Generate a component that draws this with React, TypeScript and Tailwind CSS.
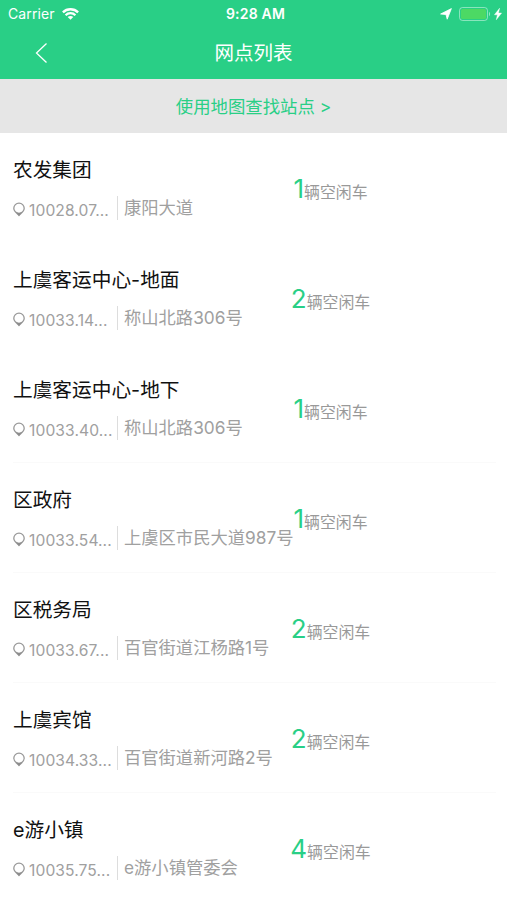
import clsx from 'clsx';

type Station = {
  name: string;
  coords: string;
  address: string;
  free: number;
  divider?: boolean;
};

const stations: Station[] = [
  { name: '农发集团', coords: '10028.07...', address: '康阳大道', free: 1 },
  { name: '上虞客运中心-地面', coords: '10033.14...', address: '称山北路306号', free: 2 },
  { name: '上虞客运中心-地下', coords: '10033.40...', address: '称山北路306号', free: 1, divider: true },
  { name: '区政府', coords: '10033.54...', address: '上虞区市民大道987号', free: 1, divider: true },
  { name: '区税务局', coords: '10033.67...', address: '百官街道江杨路1号', free: 2, divider: true },
  { name: '上虞宾馆', coords: '10034.33...', address: '百官街道新河路2号', free: 2, divider: true },
  { name: 'e游小镇', coords: '10035.75...', address: 'e游小镇管委会', free: 4 },
];

const WifiIcon = () => (
  <svg className="ml-[7px] h-3 w-[17px]" viewBox="0 0 17 12" fill="none" stroke="white" strokeWidth="2.3">
    <path d="M0.9 4.4C5 0.2 12 0.2 16.1 4.4" />
    <path d="M3.6 7.2C6.3 4.5 10.7 4.5 13.4 7.2" />
    <path d="M8.5 11.8L5.7 9C7.2 7.6 9.8 7.6 11.3 9Z" fill="white" stroke="none" />
  </svg>
);

const LocationArrow = () => (
  <svg className="h-3 w-3" viewBox="0 0 12 12" fill="white" stroke="white" strokeWidth="0.8" strokeLinejoin="round">
    <path d="M11.4 0.6L7.2 11.2L6 6.6L0.6 6Z" />
  </svg>
);

const Battery = () => (
  <svg className="ml-[7px] h-[14px] w-[32px]" viewBox="0 0 32 14">
    <rect x="0.5" y="0.5" width="28" height="13" rx="3" fill="none" stroke="white" strokeOpacity="0.45" />
    <rect x="2" y="2" width="25" height="10" rx="1.5" fill="#4cd964" />
    <path d="M30 4.8C31.5 5.5 31.5 8.5 30 9.2Z" fill="white" fillOpacity="0.5" />
  </svg>
);

const Bolt = () => (
  <svg className="ml-[3px] h-3 w-2" viewBox="0 0 8 12" fill="white" stroke="white" strokeWidth="0.4">
    <path d="M5.6 0.2L0.4 6.8H3.4L2.3 11.8L7.6 5H4.5Z" />
  </svg>
);

const PinIcon = () => (
  <svg className="mt-[3px] h-[15px] w-3 shrink-0" viewBox="0 0 12 15">
    <path
      d="M6 13.4C4.8 11.9 0.8 9.8 0.8 6.3A5.2 5.2 0 0 1 11.2 6.3C11.2 9.8 7.2 11.9 6 13.4Z"
      fill="none"
      stroke="#999999"
      strokeWidth="1.3"
    />
    <path d="M2.4 9.6C4.8 11 7.2 11 9.6 9.6L6 13.9Z" fill="#8c8c8c" />
  </svg>
);

const StationRow = ({ name, coords, address, free, divider }: Station) => (
  <li
    className={clsx(
      'relative ml-[13px] mr-[11px] h-[110px] border-b pt-6',
      divider ? 'border-[#fafafa]' : 'border-transparent',
    )}
  >
    <h2 className="text-[19.7px] leading-[26px] text-[#111111]">{name}</h2>
    <div className="mt-[13px] flex h-6 items-center text-[#a0a0a0]">
      <PinIcon />
      <span className="ml-1 mt-[5px] w-[88px] shrink-0 text-[15.6px] leading-6 tracking-[0.1px]">{coords}</span>
      <span className="h-6 w-px shrink-0 bg-[#dddddd]" />
      <span className="-mt-px ml-[6px] whitespace-nowrap text-[17.3px] leading-6">{address}</span>
    </div>
    {/* Free vehicle counter, lies over the end of long addresses */}
    <div className="absolute left-[258px] top-10 flex w-[120px] items-baseline justify-center whitespace-nowrap leading-8">
      <span className="-ml-px text-[26px] text-[#29cf86]">{free}</span>
      <span className="text-[15.9px] text-[#999999]">辆空闲车</span>
    </div>
  </li>
);

const App = () => {
  return (
    <div className="h-[900px] w-[507px] overflow-hidden bg-white font-['Inter','Noto_Sans_CJK_SC',sans-serif]">
      <header className="h-[79px] bg-[#29cf86] text-white">
        {/* Status bar */}
        <div className="grid h-[27px] grid-cols-3 items-center pl-[8px] pr-[5px]">
          <div className="flex items-center">
            <span className="text-[14px] tracking-[0.1px]">Carrier</span>
            <WifiIcon />
          </div>
          <span className="pl-px text-center text-[14px] font-semibold tracking-[0.2px]">9:28 AM</span>
          <div className="flex items-center justify-end">
            <LocationArrow />
            <Battery />
            <Bolt />
          </div>
        </div>

        {/* Navigation bar */}
        <div className="grid h-[52px] grid-cols-3 items-center">
          <svg className="ml-[35px] h-[22px] w-[13px]" viewBox="0 0 13 22" fill="none" stroke="white" strokeWidth="1.3">
            <path d="M11.5 1.5L1.5 11L11.5 20.5" />
          </svg>
          <h1 className="text-center text-[19.5px] leading-7">网点列表</h1>
        </div>
      </header>

      <a className="flex h-[54px] items-center justify-center bg-[#e6e6e6] pt-[2px] text-[17.4px] text-[#29cf86]">
        使用地图查找站点 &gt;
      </a>

      <ul>
        {stations.map((station) => (
          <StationRow key={station.name} {...station} />
        ))}
      </ul>
    </div>
  );
};

export default App;
